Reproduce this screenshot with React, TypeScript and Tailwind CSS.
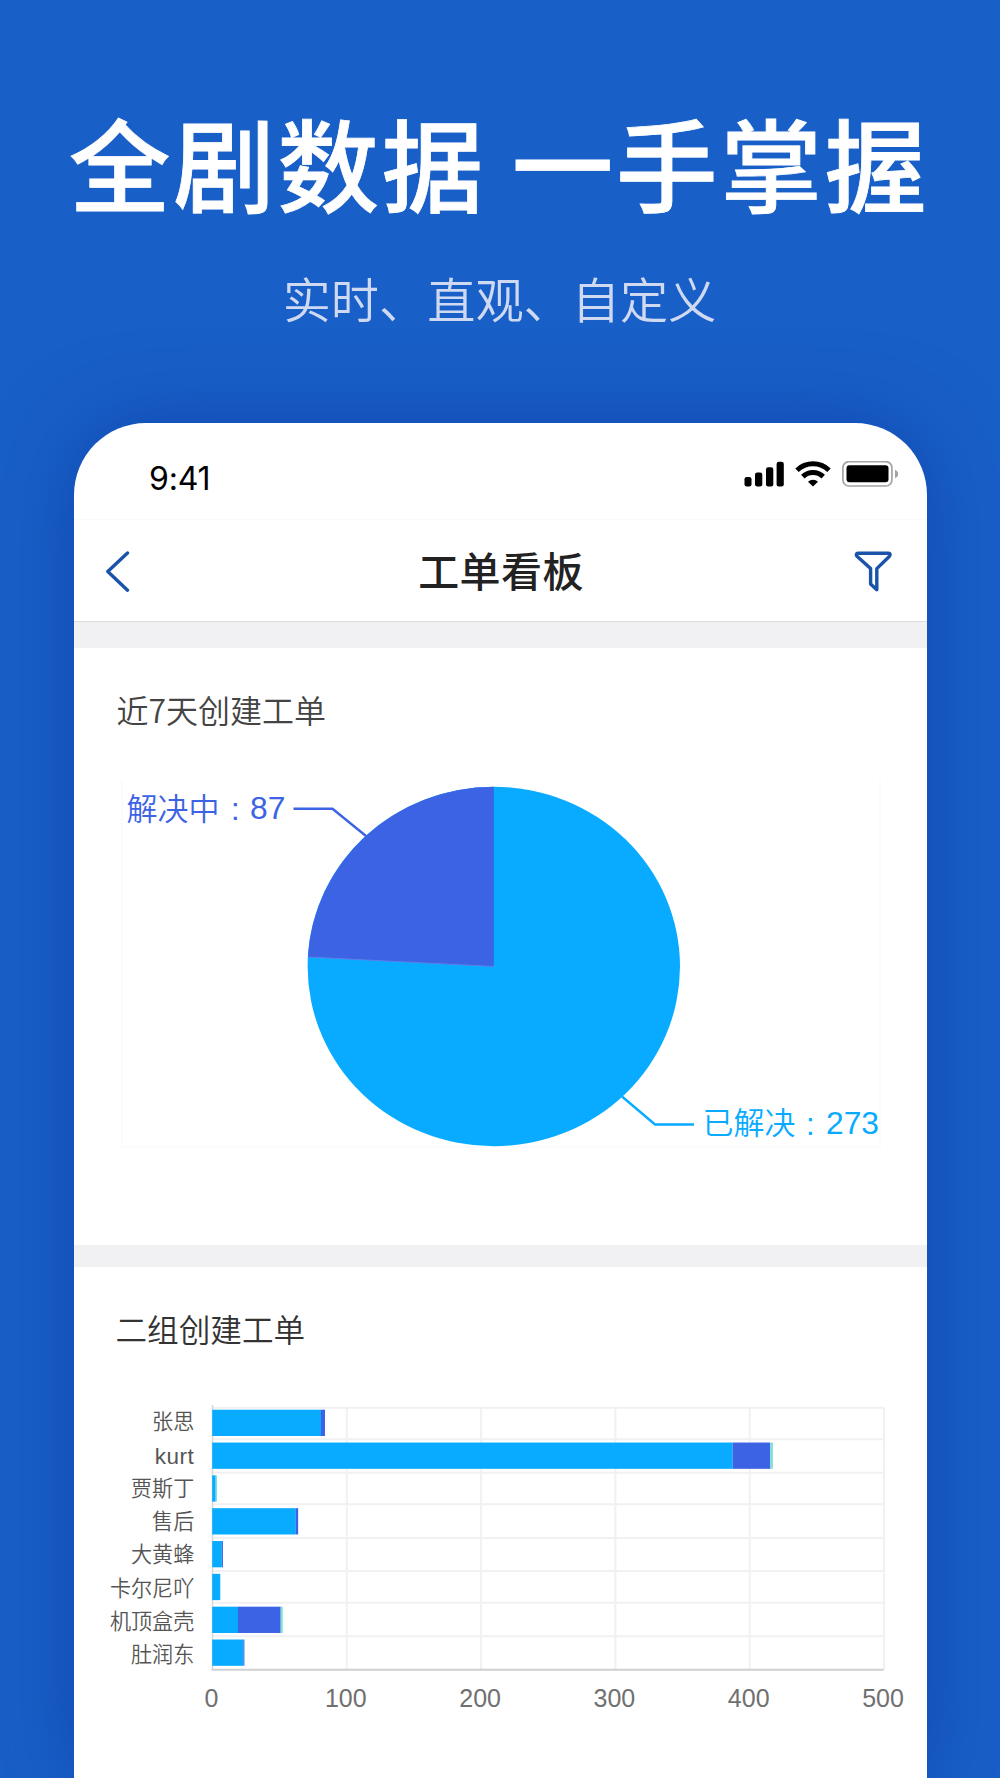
const CYAN = '#08abff'
const INDIGO = '#3d63e5'
const GREEN = '#7fe0d4'

const AXIS_X = 138.5
const UNIT = 1.343
const GRID_ROWS = [11.7, 43.2, 76.8, 108.3, 142, 175, 206.8, 240.2]
const TICKS = [0, 100, 200, 300, 400, 500]

// values: resolved, in progress, closed
const ROWS: { name: string; values: number[] }[] = [
  { name: '张思', values: [81, 3, 0] },
  { name: 'kurt', values: [387.5, 28, 2] },
  { name: '贾斯丁', values: [2.6, 0, 1] },
  { name: '售后', values: [62.3, 1.7, 0] },
  { name: '大黄蜂', values: [7.2, 0.8, 0] },
  { name: '卡尔尼吖', values: [6, 0, 0] },
  { name: '机顶盒壳', values: [19.2, 31.8, 1.5] },
  { name: '肚润东', values: [23.2, 0.8, 0] },
]
const COLORS = [CYAN, INDIGO, GREEN]

function SignalIcon() {
  return (
    <svg width="40" height="26" viewBox="0 0 40 26">
      <rect x="0.5" y="16" width="7" height="9.5" rx="2.2" />
      <rect x="11" y="11.5" width="7.3" height="14" rx="2.2" />
      <rect x="22" y="6.2" width="7.3" height="19.3" rx="2.2" />
      <rect x="32.6" y="0.8" width="7.2" height="24.7" rx="2.2" />
    </svg>
  )
}

function WifiIcon() {
  return (
    <svg width="36" height="26" viewBox="0 0 36 26">
      <g fill="none" stroke="#000" strokeWidth="5">
        <path d="M2 9.2a23.2 23.2 0 0 1 32 0" />
        <path d="M7.8 15.6a14.8 14.8 0 0 1 20.4 0" />
      </g>
      <path d="M18 25.4l-5-4.7a7.2 7.2 0 0 1 10 0z" />
    </svg>
  )
}

function BatteryIcon() {
  return (
    <svg width="57" height="27" viewBox="0 0 57 27">
      <rect x="0.9" y="0.6" width="49" height="24.4" rx="6" fill="none" stroke="#a3a3a3" strokeWidth="1.7" />
      <rect x="4.5" y="4.3" width="42" height="17" rx="3" />
      <path d="M53 8.8c2 .8 3.2 2.4 3.2 4.2s-1.2 3.4-3.2 4.2z" fill="#a3a3a3" />
    </svg>
  )
}

function StatusBar() {
  return (
    <div className="flex h-24 items-start justify-between pl-[75.5px] pr-7">
      <span className="mt-[39px] font-['Inter'] text-[32px] leading-[34px] tracking-[-0.2px] text-black">9:41</span>
      <div className="mt-[38px] flex items-start">
        <SignalIcon />
        <div className="ml-[11px]">
          <WifiIcon />
        </div>
        <div className="ml-[11px]">
          <BatteryIcon />
        </div>
      </div>
    </div>
  )
}

function NavBar() {
  return (
    <div className="flex h-[103px] items-center justify-between border-t border-b border-t-[#fafafa] border-b-[#dcdcde] pl-[31px] pr-[33px]">
      <svg width="26" height="42" viewBox="0 0 26 42" fill="none" stroke="#1a53aa" strokeWidth="3.4" strokeLinecap="round" strokeLinejoin="round">
        <path d="M22.5 3L2.8 21.6L22.5 40.2" />
      </svg>
      <h2 className="mb-[3px] ml-[18px] text-[41px] leading-[60px] font-medium tracking-[0.4px] text-[#222]">工单看板</h2>
      <svg width="40" height="42" viewBox="0 0 40 42" fill="none" stroke="#1a53aa" strokeWidth="3.4" strokeLinejoin="round">
        <path d="M5 3.3H35.5C37.3 3.3 37.6 5 36.5 6.2L23.8 18.6V39.8L17.6 34V18.6L4 6.2C2.8 5 3.2 3.3 5 3.3Z" />
      </svg>
    </div>
  )
}

function PieChart() {
  return (
    <svg className="block" width="853" height="473" viewBox="0 0 853 473">
      <path d="M48 8V375H806V8" fill="none" stroke="#fafafa" strokeWidth="1.5" />
      <ellipse cx="419.8" cy="194.5" rx="186.2" ry="179.8" fill={CYAN} />
      <path d="M419.8 194.5V14.7A186.2 179.8 0 0 0 233.9 185Z" fill={INDIGO} />
      <path d="M233.9 185L419.8 194.5" stroke="#5f7fe8" strokeWidth="1" />
      <polyline points="219.5,36.7 258.5,36.7 292,64" fill="none" stroke={INDIGO} strokeWidth="2.4" />
      <polyline points="548,324.5 581,352.5 620,352.5" fill="none" stroke={CYAN} strokeWidth="2.4" />
      <g fontSize="31" fill={INDIGO} className="font-[350]">
        <text x="52.5" y="47.5">解决中</text>
        <text x="157" y="47.5" className="font-['Liberation_Sans']">:</text>
        <text x="176" y="47" fontSize="31.8" className="font-['Liberation_Sans']">87</text>
      </g>
      <g fontSize="31" fill={CYAN} className="font-[350]">
        <text x="628.5" y="362">已解决</text>
        <text x="732" y="362.5" className="font-['Liberation_Sans']">:</text>
        <text x="752" y="362" fontSize="31.8" className="font-['Liberation_Sans']">273</text>
      </g>
    </svg>
  )
}

function BarChart() {
  return (
    <svg className="block" width="853" height="382" viewBox="0 0 853 382">
      <g stroke="#f1f1f3" strokeWidth="2">
        {GRID_ROWS.map((y) => (
          <path key={y} d={`M${AXIS_X} ${y}H809.8`} />
        ))}
        {TICKS.slice(1).map((t) => (
          <path key={t} d={`M${AXIS_X + t * UNIT} 11V274`} />
        ))}
      </g>
      <path d={`M${AXIS_X} 9V274`} stroke="#d8d8dc" strokeWidth="1.5" />
      <path d="M137.5 273.8H809.5" stroke="#d0d0d2" strokeWidth="2" />
      {ROWS.map(({ name, values }, i) => {
        const top = 13.7 + i * 32.83
        const latin = name === 'kurt'
        let x = AXIS_X - 0.3
        return (
          <g key={name}>
            <text
              x="120.3"
              y={latin ? 67.5 : 33.4 + i * 33.25}
              textAnchor="end"
              fontSize={latin ? 22.5 : 21.1}
              fill="#555"
              className={latin ? "font-['Liberation_Sans'] tracking-[0.5px]" : 'font-[350]'}
            >
              {name}
            </text>
            {values.map((v, s) => {
              const start = x
              x += v * UNIT
              return v > 0 && <rect key={s} x={start} y={top} width={v * UNIT} height="26.3" fill={COLORS[s]} />
            })}
          </g>
        )
      })}
      {TICKS.map((t) => (
        <text
          key={t}
          x={AXIS_X + t * UNIT - 1}
          y="310.5"
          textAnchor="middle"
          fontSize="25"
          fill="#707070"
          className="font-['Liberation_Sans']"
        >
          {t}
        </text>
      ))}
    </svg>
  )
}

export default function App() {
  return (
    <main className="flex h-[1778px] w-[1000px] flex-col items-center overflow-hidden bg-[#195fc8] font-['Noto_Sans_CJK_SC',sans-serif]">
      <h1 className="mt-[91px] mr-0.5 text-[101.5px] leading-[140px] font-medium tracking-[2.8px] whitespace-nowrap text-white [-webkit-text-stroke:0.8px_#fff]">
        全剧数据 一手掌握
      </h1>
      <p className="mt-9 mr-px text-[48.2px] leading-[60px] font-[350] text-[#d0d9f2]">实时、直观、自定义</p>
      <div className="mt-24 h-[1355px] w-[853px] shrink-0 overflow-hidden rounded-t-[72px] bg-white shadow-[0_0_80px_rgba(8,50,150,0.5)]">
        <StatusBar />
        <NavBar />
        <div className="h-[26px] bg-[#f1f1f4]" />
        <section className="h-[597px]">
          <h3 className="h-[124px] pt-[41px] pl-[43px] text-[32px] leading-[40px] font-[350] text-[#444]">近7天创建工单</h3>
          <PieChart />
        </section>
        <div className="h-[22px] bg-[#f1f1f4]" />
        <section>
          <h3 className="h-[129px] pt-[41px] pl-[42px] text-[31.6px] leading-[40px] font-[350] text-[#333]">二组创建工单</h3>
          <BarChart />
        </section>
      </div>
    </main>
  )
}
